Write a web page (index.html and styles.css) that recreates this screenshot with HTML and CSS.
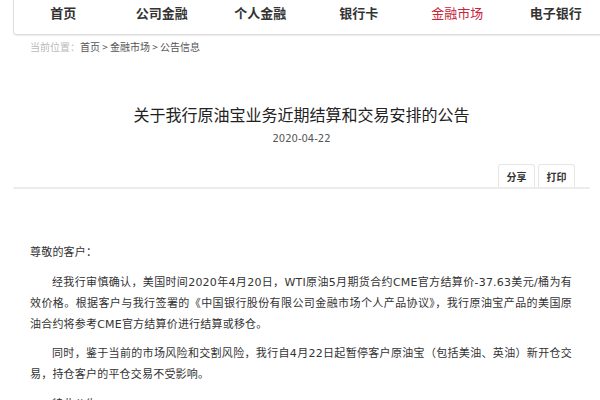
FILE: index.html
```html
<!DOCTYPE html>
<html lang="zh-CN">
<head>
<meta charset="utf-8">
<title>公告信息</title>
<link rel="stylesheet" href="styles.css">
</head>
<body>
<div class="page">
  <nav class="nav">
    <a class="nav-item">首页</a>
    <a class="nav-item">公司金融</a>
    <a class="nav-item">个人金融</a>
    <a class="nav-item">银行卡</a>
    <a class="nav-item active">金融市场</a>
    <a class="nav-item">电子银行</a>
  </nav>
  <div class="crumb"><span class="crumb-label">当前位置：</span>首页 &gt; 金融市场 &gt; 公告信息</div>
  <h1 class="title">关于我行原油宝业务近期结算和交易安排的公告</h1>
  <div class="date">2020-04-22</div>
  <div class="tools">
    <span class="tool">分享</span>
    <span class="tool">打印</span>
  </div>
  <div class="rule"></div>
  <div class="content">
    <p class="greet">尊敬的客户：</p>
    <p>经我行审慎确认，美国时间2020年4月20日，WTI原油5月期货合约CME官方结算价-37.63美元/桶为有效价格。根据客户与我行签署的《中国银行股份有限公司金融市场个人产品协议》，我行原油宝产品的美国原油合约将参考CME官方结算价进行结算或移仓。</p>
    <p>同时，鉴于当前的市场风险和交割风险，我行自4月22日起暂停客户原油宝（包括美油、英油）新开仓交易，持仓客户的平仓交易不受影响。</p>
    <p>特此公告。</p>
  </div>
</div>
</body>
</html>
```

FILE: styles.css
```css
html, body {
  margin: 0;
  padding: 0;
  overflow: hidden;
  background: #fff;
}
body {
  font-family: "DejaVu Sans", "Noto Sans CJK SC", sans-serif;
  color: #333;
}
.page {
  width: 577px;
  margin-left: 13px;
}
.nav {
  display: flex;
  width: 640px;
  height: 35px;
  box-sizing: border-box;
  border: 1px solid #dedede;
  border-top: none;
  border-radius: 0 0 0 4px;
  box-shadow: 0 1px 1px rgba(0, 0, 0, 0.08);
}
.nav-item {
  flex: 0 0 98.5px;
  text-align: center;
  line-height: 26px;
  font-size: 13px;
  font-weight: bold;
  font-family: "Noto Sans CJK SC", sans-serif;
  color: #333;
}
.nav-item.active {
  color: #c8233a;
  font-weight: normal;
}
.crumb {
  margin-top: 5px;
  padding-left: 17px;
  line-height: 14px;
  font-size: 10px;
  color: #555;
  font-family: "Noto Sans CJK SC", sans-serif;
}
.crumb-label {
  color: #bbb;
}
.title {
  margin: 48px 0 0;
  text-align: center;
  font-size: 16px;
  line-height: 24px;
  font-weight: normal;
  color: #222;
  font-family: "Noto Sans CJK SC", sans-serif;
}
.date {
  margin-top: 6px;
  text-align: center;
  font-size: 10px;
  line-height: 14px;
  color: #555;
}
.tools {
  display: flex;
  justify-content: flex-end;
  gap: 3px;
  margin-top: 18px;
  padding-right: 15px;
}
.tool {
  width: 37px;
  height: 23px;
  box-sizing: border-box;
  border: 1px solid #e6e6e6;
  border-bottom: none;
  border-radius: 3px 3px 0 0;
  text-align: center;
  line-height: 23px;
  font-size: 10px;
  font-weight: bold;
  color: #333;
  font-family: "Noto Sans CJK SC", sans-serif;
}
.rule {
  height: 2px;
  background: #ececec;
  border-radius: 1px;
}
.content {
  padding: 53px 17px 0;
  width: 542px;
  font-size: 11px;
  line-height: 21px;
  letter-spacing: 0.2px;
  text-align: justify;
}
.content p {
  margin: 0 0 8.5px;
  text-indent: 2em;
}
.content p.greet {
  text-indent: 0;
}
```
